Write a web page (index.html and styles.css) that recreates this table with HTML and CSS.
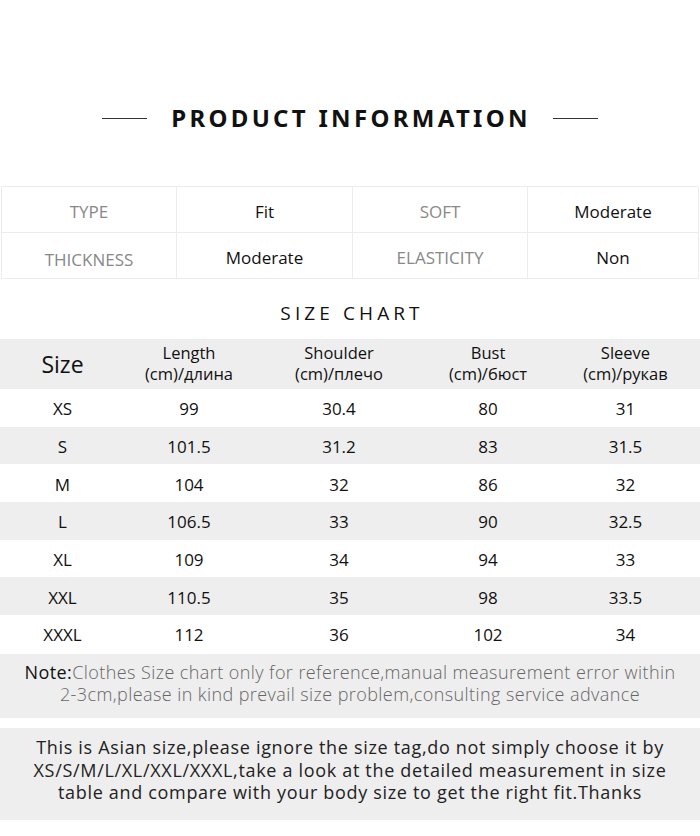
FILE: index.html
```html
<!DOCTYPE html>
<html>
<head>
<meta charset="utf-8">
<link rel="stylesheet" href="styles.css">
</head>
<body>
<div class="page">
  <div class="title-wrap">
    <span class="rule"></span>
    <h1 class="title">PRODUCT INFORMATION</h1>
    <span class="rule"></span>
  </div>

  <div class="info">
    <div class="cell label">TYPE</div>
    <div class="cell value">Fit</div>
    <div class="cell label">SOFT</div>
    <div class="cell value">Moderate</div>
    <div class="cell label low">THICKNESS</div>
    <div class="cell value">Moderate</div>
    <div class="cell label">ELASTICITY</div>
    <div class="cell value">Non</div>
  </div>

  <h2 class="subtitle">SIZE CHART</h2>

  <div class="sizes">
    <div class="row head">
      <div class="c size-h">Size</div>
      <div class="c">Length<br>(cm)/длина</div>
      <div class="c">Shoulder<br>(cm)/плечо</div>
      <div class="c">Bust<br>(cm)/бюст</div>
      <div class="c">Sleeve<br>(cm)/рукав</div>
    </div>
    <div class="row"><div class="c">XS</div><div class="c">99</div><div class="c">30.4</div><div class="c">80</div><div class="c">31</div></div>
    <div class="row alt"><div class="c">S</div><div class="c">101.5</div><div class="c">31.2</div><div class="c">83</div><div class="c">31.5</div></div>
    <div class="row"><div class="c">M</div><div class="c">104</div><div class="c">32</div><div class="c">86</div><div class="c">32</div></div>
    <div class="row alt"><div class="c">L</div><div class="c">106.5</div><div class="c">33</div><div class="c">90</div><div class="c">32.5</div></div>
    <div class="row"><div class="c">XL</div><div class="c">109</div><div class="c">34</div><div class="c">94</div><div class="c">33</div></div>
    <div class="row alt"><div class="c">XXL</div><div class="c">110.5</div><div class="c">35</div><div class="c">98</div><div class="c">33.5</div></div>
    <div class="row"><div class="c">XXXL</div><div class="c">112</div><div class="c">36</div><div class="c">102</div><div class="c">34</div></div>
  </div>

  <div class="note">
    <p><span class="note-key">Note:</span>Clothes Size chart only for reference,manual measurement error within<br>2-3cm,please in kind prevail size problem,consulting service advance</p>
  </div>

  <div class="asian">
    <p>This is Asian size,please ignore the size tag,do not simply choose it by<br>XS/S/M/L/XL/XXL/XXXL,take a look at the detailed measurement in size<br>table and compare with your body size to get the right fit.Thanks</p>
  </div>
</div>
</body>
</html>
```

FILE: styles.css
```css
* { box-sizing: border-box; }
html, body {
  margin: 0;
  padding: 0;
  background: #fff;
}
body {
  font-family: "Open Sans", "Noto Sans", sans-serif;
  color: #111;
  width: 700px;
  height: 836px;
  overflow: hidden;
}
.page {
  display: flex;
  flex-direction: column;
}
.title-wrap {
  display: flex;
  align-items: center;
  justify-content: center;
  height: 186px;
  padding-top: 50px;
}
.rule {
  display: block;
  width: 45px;
  height: 1px;
  background: #333;
}
.title {
  margin: 0 22px 0 24px;
  font-family: "Noto Sans", "Open Sans", sans-serif;
  font-weight: 700;
  font-size: 24px;
  letter-spacing: 3.3px;
  color: #111;
  line-height: 1;
}
.info {
  display: grid;
  grid-template-columns: 175px 176px 175px 171px;
  grid-auto-rows: 46px;
  margin-left: 1px;
  width: 697px;
  border-top: 1px solid #ececec;
  border-left: 1px solid #ececec;
}
.info .cell {
  display: flex;
  align-items: center;
  justify-content: center;
  border-right: 1px solid #ececec;
  border-bottom: 1px solid #ececec;
  font-size: 17px;
  padding-top: 4px;
}
.info .label {
  color: #888;
}
.info .label.low {
  padding-top: 8px;
}
.info .value {
  color: #111;
}
.subtitle {
  margin: 0;
  height: 60px;
  padding-top: 22px;
  padding-left: 4px;
  text-align: center;
  font-weight: 400;
  font-size: 19px;
  letter-spacing: 4.1px;
  line-height: 24px;
  color: #111;
}
.sizes {
  display: flex;
  flex-direction: column;
}
.row {
  display: grid;
  grid-template-columns: 125px 128px 172px 126px 149px;
  height: 37.7px;
  align-items: center;
}
.row.head {
  height: 50px;
  background: #eeeeee;
}
.row.alt {
  background: #eeeeee;
}
.c {
  text-align: center;
  font-size: 17px;
  color: #111;
  line-height: 20px;
  padding-top: 3px;
}
.row.head .c {
  font-size: 16.5px;
  line-height: 21px;
  padding-top: 0;
  padding-bottom: 2px;
}
.row.head .size-h {
  font-size: 23px;
  line-height: 28px;
  padding-top: 2px;
}
.note {
  margin-top: 1px;
  height: 64px;
  padding-bottom: 6px;
  background: #eeeeee;
  display: flex;
  align-items: center;
  justify-content: center;
  text-align: center;
}
.note p {
  margin: 0;
  font-size: 18px;
  font-weight: 300;
  letter-spacing: 0.42px;
  line-height: 22px;
  color: #666;
  white-space: nowrap;
}
.note-key {
  color: #111;
  font-weight: 400;
}
.asian {
  margin-top: 10px;
  height: 92px;
  padding-bottom: 8px;
  background: #eeeeee;
  display: flex;
  align-items: center;
  justify-content: center;
  text-align: center;
}
.asian p {
  margin: 0;
  font-size: 18px;
  line-height: 22.4px;
  color: #222;
  letter-spacing: 0.68px;
  white-space: nowrap;
}
```
